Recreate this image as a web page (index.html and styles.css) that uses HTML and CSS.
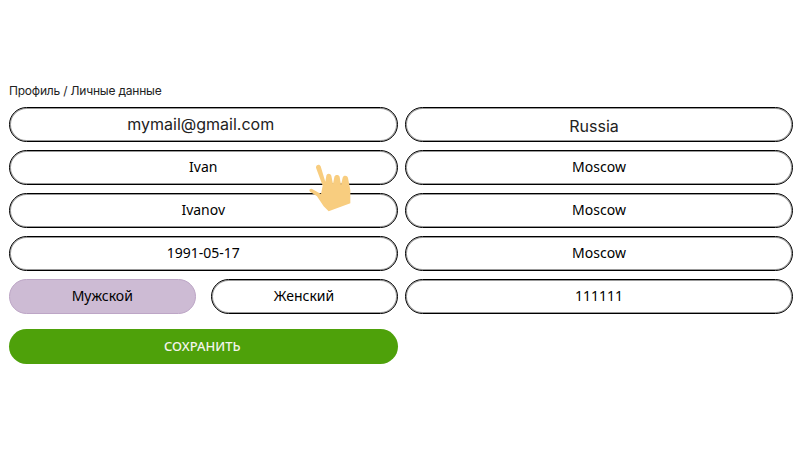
FILE: index.html
```html
<!DOCTYPE html>
<html lang="ru">
<head>
<meta charset="utf-8">
<title>Профиль</title>
<link rel="stylesheet" href="styles.css">
</head>
<body>
<main class="page">
  <div class="crumb">Профиль / Личные данные</div>
  <div class="form">
    <div class="col">
      <div class="field big">mymail@gmail.com</div>
      <div class="field">Ivan</div>
      <div class="field">Ivanov</div>
      <div class="field">1991-05-17</div>
      <div class="genders">
        <div class="field selected">Мужской</div>
        <div class="field">Женский</div>
      </div>
      <div class="save">СОХРАНИТЬ</div>
    </div>
    <div class="col">
      <div class="field big low">Russia</div>
      <div class="field">Moscow</div>
      <div class="field">Moscow</div>
      <div class="field">Moscow</div>
      <div class="field">111111</div>
    </div>
  </div>
  <svg class="hand" viewBox="50 70 135 150" width="45" height="50" aria-hidden="true">
    <path d="M77 84c-1-9 11-13 14-4l14 46 3-18c1-8 13-8 15 0l5 25 4-21c2-8 14-8 16 0l4 23 5-21c2-8 14-8 16 1l7 36 0 40-65 24-15-15-20-30-21-14c-4-4-1-10 5-9l28 16 5-25z" fill="#f8cd7f"/>
  </svg>
</main>
</body>
</html>
```
FILE: styles.css
```css
* { box-sizing: border-box; }
html, body { margin: 0; background: #fff; }
body { width: 800px; height: 450px; overflow: hidden; font-family: "Noto Sans", "Open Sans", sans-serif; color: #111; }
.page { position: relative; height: 450px; padding: 83px 7px 0 9px; }
.crumb { font-family: Inter, sans-serif; font-size: 12px; line-height: 16px; letter-spacing: -0.2px; height: 24px; color: #222; }
.form { display: grid; grid-template-columns: 388.500px 388px; column-gap: 7.500px; }
.col { display: flex; flex-direction: column; gap: 8.200px; }
.field { height: 34.800px; border: 1px solid #000; box-shadow: inset 0 0 0 1px rgba(0, 0, 0, 0.4); border-radius: 17.500px; background: #fff; display: flex; align-items: center; justify-content: center; padding-bottom: 2px; font-size: 14px; font-weight: 400; color: #000; flex: none; }
.big { font-family: Inter, sans-serif; font-size: 16px; font-weight: 400; padding: 0 5px 0 0; color: #222; }
.low { padding: 4px 10px 0 0; }
.genders { display: grid; grid-template-columns: 186.500px 187px; justify-content: space-between; }
.selected { background: #cdbbd4; border-color: #bda6c6; box-shadow: none; }
.save { margin-top: 7px; height: 35.500px; border-radius: 17.500px; background: #4ea10a; color: #f4f4ec; display: flex; align-items: center; justify-content: center; padding: 0 2px 2px 0; font-size: 13px; font-weight: 500; }
.hand { position: absolute; left: 306.670px; top: 163.330px; }
```
